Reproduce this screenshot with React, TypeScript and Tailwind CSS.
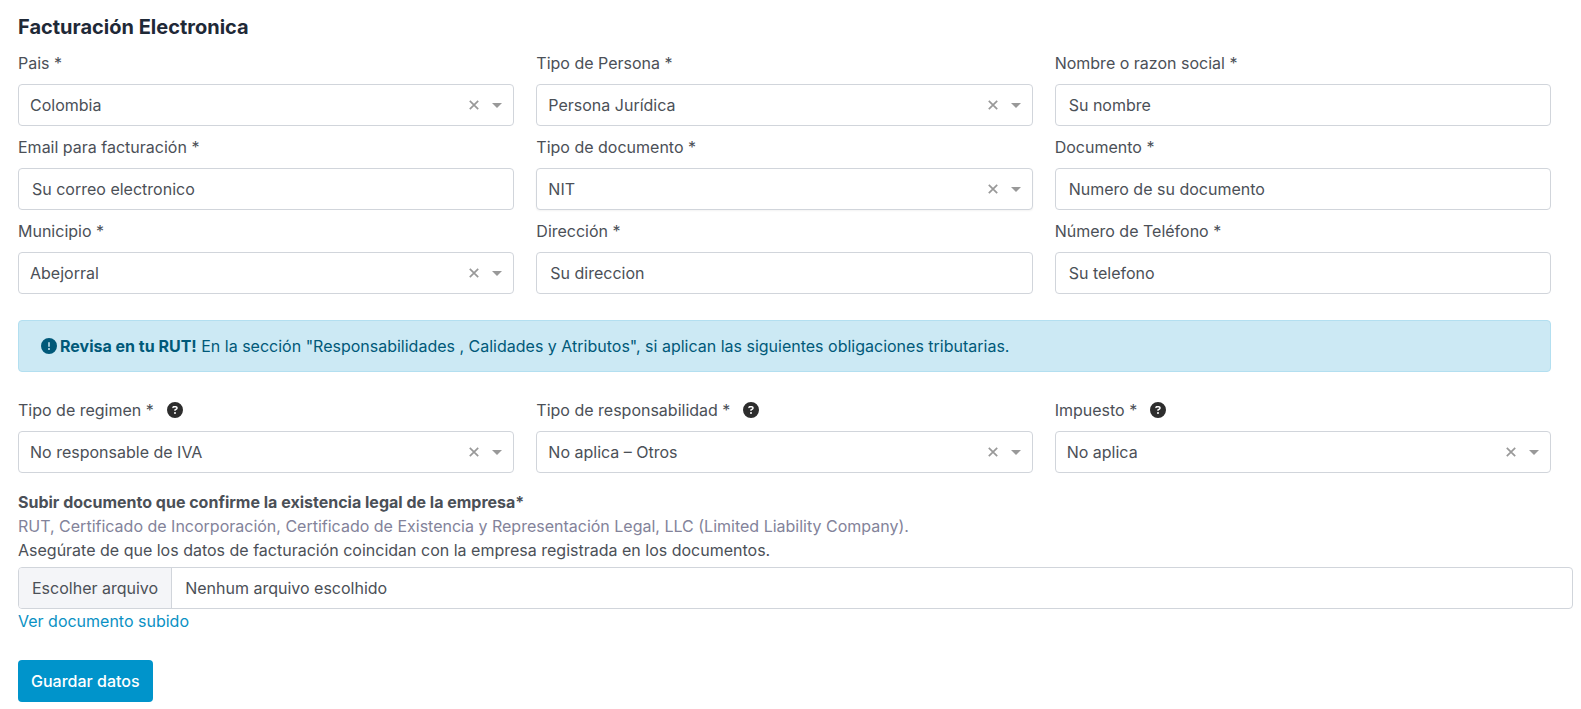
import { useState, type ReactNode } from 'react';
import { FaCircleExclamation, FaCircleQuestion } from 'react-icons/fa6';

const control =
  'h-[42px] w-full rounded border border-[#d1d5db] bg-white text-base text-[#4b5057] outline-none focus:border-[#0094cb]';

function Field({ id, label, help, children }: { id: string; label: string; help?: boolean; children: ReactNode }) {
  return (
    <div>
      <div className="mb-[9px] flex h-6 items-center gap-[13px]">
        <label htmlFor={id}>{label} *</label>
        {help && (
          <button type="button" aria-label={`Ayuda: ${label}`} className="text-[#2d2d2d]">
            <FaCircleQuestion className="size-4" />
          </button>
        )}
      </div>
      {children}
    </div>
  );
}

type SelectFieldProps = { id: string; label: string; value: string; help?: boolean; raised?: boolean };

function SelectField({ id, label, value: initial, help, raised }: SelectFieldProps) {
  const [value, setValue] = useState(initial);
  return (
    <Field id={id} label={label} help={help}>
      <div className="relative">
        <select
          id={id}
          value={value}
          onChange={(e) => setValue(e.target.value)}
          className={`${control} appearance-none pl-[11px] pr-14 ${raised ? 'shadow-xs' : ''}`}
        >
          <option value="" />
          <option value={initial}>{initial}</option>
        </select>
        <div className="pointer-events-none absolute inset-y-0 right-3 flex items-center gap-[13px]">
          <button
            type="button"
            aria-label={`Limpiar ${label}`}
            onClick={() => setValue('')}
            className="pointer-events-auto text-[#999999]"
          >
            <svg viewBox="0 0 10 10" className="size-[10px]" fill="none" stroke="currentColor" strokeWidth="1.7">
              <path d="M.8.8l8.4 8.4M9.2.8L.8 9.2" />
            </svg>
          </button>
          <svg viewBox="0 0 10 5" className="h-[5px] w-[10px] fill-[#999999]" aria-hidden="true">
            <path d="M0 0h10L5 5z" />
          </svg>
        </div>
      </div>
    </Field>
  );
}

function TextField({ id, label, placeholder, type = 'text' }: { id: string; label: string; placeholder: string; type?: string }) {
  return (
    <Field id={id} label={label}>
      <input id={id} type={type} placeholder={placeholder} className={`${control} px-[13px] placeholder:text-[#4b5057]`} />
    </Field>
  );
}

export default function App() {
  const [fileName, setFileName] = useState('Nenhum arquivo escolhido');

  return (
    <form
      className="bg-white pb-2 pl-[18px] pr-2 pt-[13px] font-['Inter',sans-serif] text-base text-[#4b5057]"
      onSubmit={(e) => e.preventDefault()}
    >
      <h2 className="mb-[10px] text-xl font-bold text-[#1f2937]">Facturación Electronica</h2>

      <div className="mr-[22px] grid grid-cols-3 gap-x-[22px] gap-y-[9px]">
        <SelectField id="pais" label="Pais" value="Colombia" />
        <SelectField id="persona" label="Tipo de Persona" value="Persona Jurídica" />
        <TextField id="nombre" label="Nombre o razon social" placeholder="Su nombre" />
        <TextField id="email" type="email" label="Email para facturación" placeholder="Su correo electronico" />
        <SelectField id="tipo-documento" label="Tipo de documento" value="NIT" raised />
        <TextField id="documento" label="Documento" placeholder="Numero de su documento" />
        <SelectField id="municipio" label="Municipio" value="Abejorral" />
        <TextField id="direccion" label="Dirección" placeholder="Su direccion" />
        <TextField id="telefono" type="tel" label="Número de Teléfono" placeholder="Su telefono" />
      </div>

      <div
        role="alert"
        className="mr-[22px] mt-[26px] flex min-h-[52px] items-center gap-[3px] rounded border border-[#b3dff0] bg-[#cce9f4] px-[22px] text-[#005979]"
      >
        <FaCircleExclamation className="size-4 shrink-0" />
        <p>
          <strong className="font-bold">Revisa en tu RUT!</strong> En la sección "Responsabilidades , Calidades y
          Atributos", si aplican las siguientes obligaciones tributarias.
        </p>
      </div>

      <div className="mr-[22px] mt-[26px] grid grid-cols-3 gap-x-[22px]">
        <SelectField id="regimen" label="Tipo de regimen" value="No responsable de IVA" help />
        <SelectField id="responsabilidad" label="Tipo de responsabilidad" value="No aplica – Otros" help />
        <SelectField id="impuesto" label="Impuesto" value="No aplica" help />
      </div>

      <div className="mt-[17px]">
        <p className="font-bold">Subir documento que confirme la existencia legal de la empresa*</p>
        <p className="text-[#83839a]">
          RUT, Certificado de Incorporación, Certificado de Existencia y Representación Legal, LLC (Limited Liability
          Company).
        </p>
        <p>Asegúrate de que los datos de facturación coincidan con la empresa registrada en los documentos.</p>
        <label
          htmlFor="archivo"
          className="relative mt-[5px] flex h-[42px] cursor-pointer items-stretch overflow-hidden rounded border border-[#d1d5db]"
        >
          <span className="flex items-center border-r border-[#d1d5db] bg-[#f4f5f8] px-[13px]">Escolher arquivo</span>
          <span className="flex items-center px-[13px]">{fileName}</span>
          <input
            id="archivo"
            type="file"
            className="sr-only"
            onChange={(e) => setFileName(e.target.files?.[0]?.name ?? 'Nenhum arquivo escolhido')}
          />
        </label>
        <a href="#documento-subido" className="text-[#0a91c4]">
          Ver documento subido
        </a>
      </div>

      <button type="submit" className="mt-[27px] h-[42px] rounded bg-[#0094cb] px-[13px] font-medium text-white">
        Guardar datos
      </button>
    </form>
  );
}
